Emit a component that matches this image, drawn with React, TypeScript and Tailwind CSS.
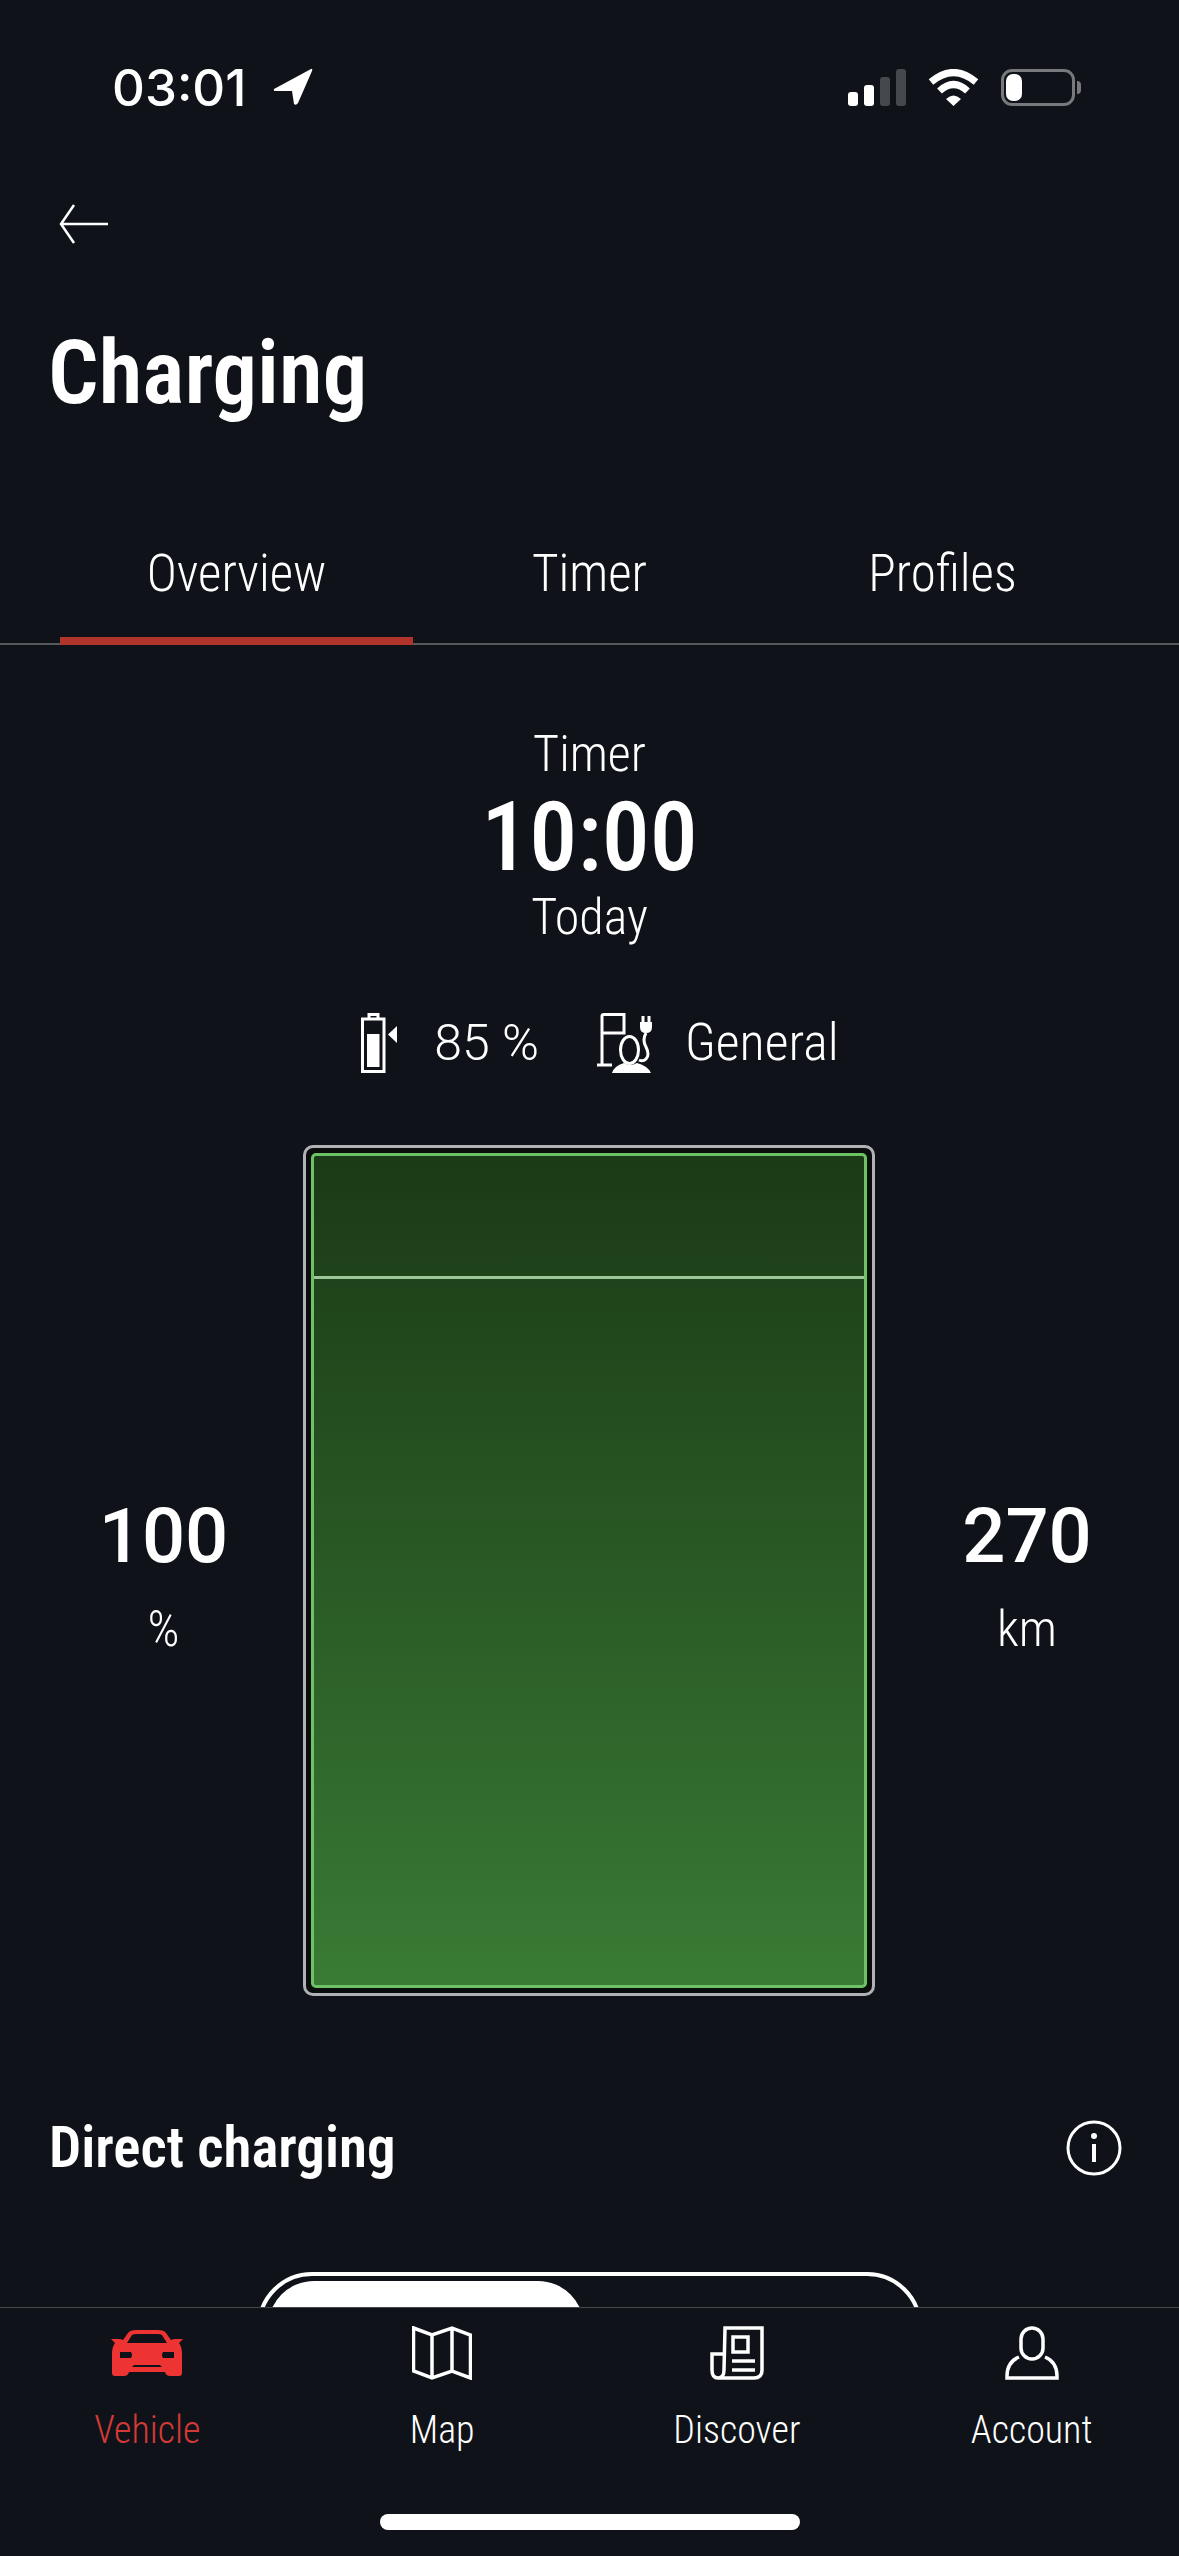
const narrow = "font-['Roboto_Condensed','Roboto',sans-serif] font-stretch-[85%] font-light"

function StatusBar() {
    return (
        <div className="flex h-[174px] items-center justify-between pl-[112px] pr-[98px]">
            <div className="flex items-center gap-[27px]">
                <span className="font-['Inter',sans-serif] text-[51px] leading-none font-medium text-white">03:01</span>
                <svg width="40" height="38" viewBox="0 0 40 38" fill="white">
                    <path d="M38 1 L1 21 Q0 23 3 23 L19 23 L21 36 Q23 38 25 35 L39 3 Q40 0 38 1Z" />
                </svg>
            </div>
            <div className="flex items-center gap-[22px]">
                <div className="flex h-[37px] items-end gap-[6px]">
                    <div className="h-[14px] w-[10px] rounded-[3px] bg-white" />
                    <div className="h-[21px] w-[10px] rounded-[3px] bg-white" />
                    <div className="h-[29px] w-[10px] rounded-[3px] bg-[#45484d]" />
                    <div className="h-[37px] w-[10px] rounded-[3px] bg-[#45484d]" />
                </div>
                <svg width="51" height="37" viewBox="0 0 51 37" fill="none" stroke="white" strokeWidth="7">
                    <path d="M3 13 Q25.5 -6 48 13" />
                    <path d="M11.5 22 Q25.5 9 39.5 22" />
                    <path d="M18 30 L25.5 37 L33 30 Q25.5 23 18 30Z" fill="white" stroke="none" />
                </svg>
                <div className="flex items-center gap-[2px]">
                    <div className="flex h-[37px] w-[74px] items-center rounded-[11px] border-[3px] border-[#77797d] pl-[2px]">
                        <div className="h-[27px] w-[16px] rounded-[7px] bg-white" />
                    </div>
                    <div className="h-[13px] w-[4px] rounded-r-full bg-[#77797d]" />
                </div>
            </div>
        </div>
    )
}

function Tabs() {
    const tabs = ["Overview", "Timer", "Profiles"]
    return (
        <div className="mt-[60px] border-b-2 border-[#55585c] px-[60px]">
            <div className="grid grid-cols-3 gap-0">
                {tabs.map((t, i) => (
                    <div
                        key={t}
                        className={`-mb-[2px] flex h-[121px] items-center justify-center border-b-[8px] pb-[12px] text-[51px] text-white ${i === 0 ? "border-[#b0332c]" : "border-transparent"}`}
                    >
                        {t}
                    </div>
                ))}
            </div>
        </div>
    )
}

function BatteryIcon() {
    return (
        <svg width="36" height="60" viewBox="0 0 36 60" fill="none" stroke="white">
            <path d="M1.5 6 H23 V58.5 H1.5Z M8 6 V1.5 H17 V6" strokeWidth="3" />
            <rect x="6" y="21" width="12.5" height="33" fill="white" stroke="none" />
            <path d="M36 13 V30 L27 21.5Z" fill="white" stroke="none" />
        </svg>
    )
}

function ProfileIcon() {
    return (
        <svg width="56" height="60" viewBox="0 0 56 60" fill="none" stroke="white" strokeWidth="3">
            <path d="M5 52 V3 Q5 1.5 7 1.5 H27 V20 H5" />
            <path d="M0 52 H15" />
            <ellipse cx="32.5" cy="37" rx="9" ry="13.5" />
            <path d="M49 20 Q45 27 49 34 Q53 42 49 46 Q46 49 42 47" />
            <path d="M43 9 H55 V14 Q55 20 49 20 Q43 20 43 14Z" fill="white" stroke="none" />
            <path d="M46 3 V9 M52 3 V9" />
            <path d="M15 60 Q17 53 27 50 Q33 54 40 50 Q51 53 54 60Z" fill="white" stroke="none" />
        </svg>
    )
}

function ChargeBar() {
    return (
        <div className="h-[851px] rounded-[10px] border-[3px] border-[#b1b2b8] bg-[#0a0d0c] p-[5px]">
            <div className="h-full rounded-[5px] border-[3px] border-[#6cc264] bg-gradient-to-b from-[#1b3a16] to-[#397b35]">
                <div className="h-[123px] border-b-[3px] border-[#9cc69a]" />
            </div>
        </div>
    )
}

function Stat({ value, unit, className }: { value: string; unit: string; className: string }) {
    return (
        <div className={`flex flex-col items-center pt-[10px] text-white ${className}`}>
            <span className="font-['Roboto',sans-serif] text-[76px] leading-none font-medium font-stretch-normal">{value}</span>
            <span className="mt-[30px] text-[50px] leading-none">{unit}</span>
        </div>
    )
}

function CarIcon() {
    return (
        <svg width="74" height="46" viewBox="0 0 74 46" fill="#ee3333">
            <path
                fillRule="evenodd"
                d="M13 10 L18 3 Q20 0 26 0 H48 Q54 0 56 3 L61 10 L64 9 H73 L69 13 Q72 17 72 24 V43 Q72 46 69 46 H60 Q56 46 55 42 H19 Q18 46 14 46 H5 Q2 46 2 43 V24 Q2 17 5 13 L1 9 H10Z M17 13 H57 L52 5 Q51 4 47 4 H27 Q23 4 22 5Z M10 22 H21 Q23 25 21 28 H10Z M53 22 H64 V28 H53 Q51 25 53 22Z M22 37 L24 35 H50 L52 37Z"
            />
        </svg>
    )
}

function MapIcon() {
    return (
        <svg width="60" height="54" viewBox="0 0 60 54" fill="none" stroke="white" strokeWidth="3.5">
            <path d="M1.5 2 L20 9 L40 2 L58.5 9 V52 L40 45 L20 52 L1.5 45Z M20 9 V52 M40 2 V45" />
        </svg>
    )
}

function NewsIcon() {
    return (
        <svg width="54" height="54" viewBox="0 0 54 54" fill="none" stroke="white" strokeWidth="3.5">
            <path d="M15 2 H52 V44 Q52 52 44 52 H8 Q14 52 14 44Z" />
            <path d="M14 28 H2 V44 Q2 52 8 52" />
            <rect x="23" y="11" width="15" height="15" />
            <path d="M22 35 H45 M22 44 H45" />
        </svg>
    )
}

function UserIcon() {
    return (
        <svg width="54" height="54" viewBox="0 0 54 54" fill="none" stroke="white" strokeWidth="3.5">
            <rect x="16" y="2" width="22" height="31" rx="11" />
            <path d="M14 31 Q2 36 2 50 V52 H52 V50 Q52 36 40 31" />
        </svg>
    )
}

function NavBar() {
    const items = [
        { label: "Vehicle", icon: <CarIcon />, active: true },
        { label: "Map", icon: <MapIcon /> },
        { label: "Discover", icon: <NewsIcon /> },
        { label: "Account", icon: <UserIcon /> },
    ]
    return (
        <div className="h-[249px] border-t border-[#44474b] bg-[#0f1319]">
            <div className="grid grid-cols-4 pt-[18px]">
                {items.map((it) => (
                    <div key={it.label} className="flex flex-col items-center">
                        <div className="flex h-[54px] items-center">{it.icon}</div>
                        <span className={`mt-[28px] text-[38px] leading-[44px] ${it.active ? "text-[#d33a36]" : "text-white"}`}>{it.label}</span>
                    </div>
                ))}
            </div>
            <div className="mx-auto mt-[62px] h-[16px] w-[420px] rounded-full bg-white" />
        </div>
    )
}

export default function App() {
    return (
        <div className={`flex h-[2556px] w-[1179px] flex-col overflow-hidden bg-[#0f1319] text-white ${narrow}`}>
            <div className="min-h-0 flex-1 overflow-hidden">
                <StatusBar />
                <div className="flex h-[100px] items-center pl-[59px]">
                    <svg width="50" height="40" viewBox="0 0 50 40" fill="none" stroke="white" strokeWidth="2.5">
                        <path d="M49 20 H2 M15 1 L2 20 L15 39" />
                    </svg>
                </div>
                <h1 className="flex h-[190px] items-center pt-[6px] pl-[48px] text-[89px] leading-none font-semibold">Charging</h1>
                <Tabs />
                <div className="mt-[76px] flex flex-col items-center">
                    <span className="text-[50px] leading-[66px]">Timer</span>
                    <span className="text-[96px] leading-[100px] font-medium">10:00</span>
                    <span className="text-[50px] leading-[60px]">Today</span>
                </div>
                <div className="mt-[66px] flex h-[60px] items-center justify-center gap-[58px] pl-[21px]">
                    <div className="flex items-center gap-[37px]">
                        <BatteryIcon />
                        <span className="font-['Roboto',sans-serif] text-[50px] font-stretch-normal">85 %</span>
                    </div>
                    <div className="flex items-center gap-[32px]">
                        <ProfileIcon />
                        <span className="text-[52px]">General</span>
                    </div>
                </div>
                <div className="mt-[72px] grid grid-cols-[303px_572px_304px] items-center">
                    <Stat value="100" unit="%" className="pl-[24px]" />
                    <ChargeBar />
                    <Stat value="270" unit="km" className="" />
                </div>
                <div className="mt-[123px] flex items-center justify-between pl-[49px] pr-[57px]">
                    <span className="text-[57px] leading-none font-semibold">Direct charging</span>
                    <svg width="56" height="56" viewBox="0 0 56 56" fill="none" stroke="white" strokeWidth="3">
                        <circle cx="28" cy="28" r="26" />
                        <path d="M28 24 V42" strokeWidth="4" />
                        <circle cx="28" cy="16" r="3" fill="white" stroke="none" />
                    </svg>
                </div>
                <div className="mx-[257px] mt-[96px] h-[110px] rounded-[55px] border-[4px] border-white py-[5px] pl-[7px]">
                    <div className="h-full w-[316px] rounded-[50px] bg-white" />
                </div>
            </div>
            <NavBar />
        </div>
    )
}
